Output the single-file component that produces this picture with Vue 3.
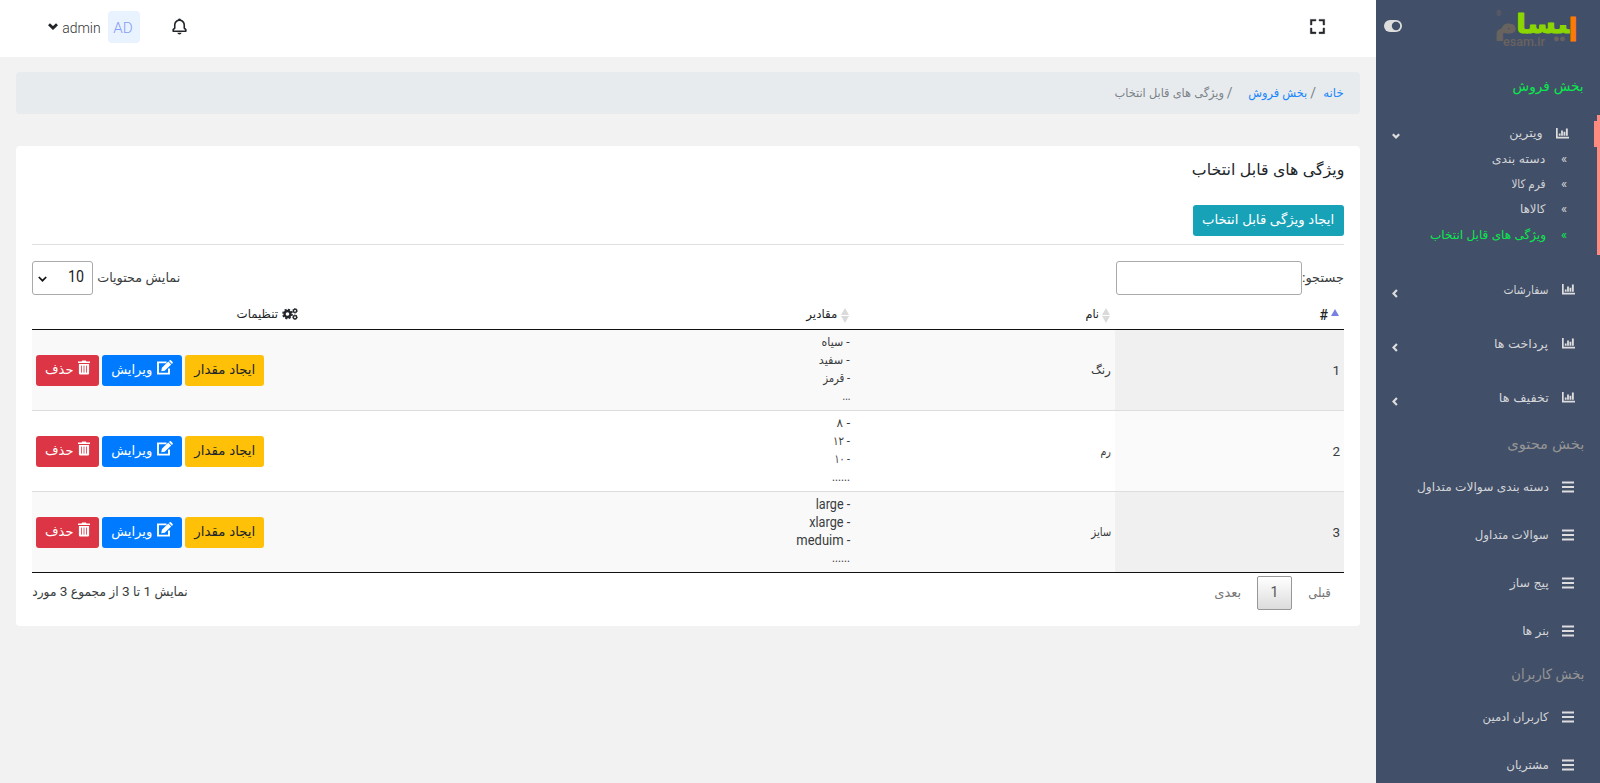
<script setup>
// Squeezes or widens a label horizontally to the given width in pixels.
const vFit = {
  mounted(el, { value }) {
    const natural = el.getBoundingClientRect().width
    if (!natural) return
    el.style.transform = `scaleX(${value / natural})`
    el.style.marginLeft = `${value - natural}px`
  }
}

const subItems = [
  { text: 'دسته بندی', w: 53.5 },
  { text: 'فرم کالا', w: 34 },
  { text: 'کالاها', w: 25.5 },
  { text: 'ویژگی های قابل انتخاب', w: 116, active: true }
]
const groups = [
  { text: 'سفارشات', w: 45 },
  { text: 'پرداخت ها', w: 54 },
  { text: 'تخفیف ها', w: 50 }
]
const sections = [
  {
    title: 'بخش محتوی', w: 77,
    items: [
      { text: 'دسته بندی سوالات متداول', w: 132 },
      { text: 'سوالات متداول', w: 74 },
      { text: 'پیج ساز', w: 39 },
      { text: 'بنر ها', w: 27 }
    ]
  },
  {
    title: 'بخش کاربران', w: 73,
    items: [
      { text: 'کاربران ادمین', w: 66 },
      { text: 'مشتریان', w: 42.5 }
    ]
  }
]
const rows = [
  { id: 1, name: 'رنگ', w: 20, values: [['- سیاه', 28], ['- سفید', 31], ['- قرمز', 27], ['...', 8]] },
  { id: 2, name: 'رم', w: 10.5, values: [['- ۸', 13.5], ['- ۱۲', 17], ['- ۱۰', 15.5], ['......', 18]] },
  { id: 3, name: 'سایز', w: 20, values: [['- large', 34.5], ['- xlarge', 41], ['- meduim', 54], ['......', 18]] }
]
</script>

<template>
  <div class="page" dir="rtl">
    <aside class="sidebar">
      <div class="brand">
        <svg class="logo" width="84" height="42" viewBox="0 0 84 42" direction="ltr">
          <text class="lg orange" x="74.5" y="32.5" textLength="9" lengthAdjust="spacingAndGlyphs">ا</text>
          <text class="lg green" x="22" y="25" textLength="53" lengthAdjust="spacingAndGlyphs">&#x200D;ىسا</text>
          <text class="lg gray" x="1" y="26" textLength="22" lengthAdjust="spacingAndGlyphs">م</text>
          <text class="latin" x="9" y="37.500" textLength="42" lengthAdjust="spacingAndGlyphs">esam.ir</text>
          <text class="reg" x="2" y="7.500">®</text>
          <circle cx="62.5" cy="31" r="2.4" fill="#69635f" />
          <circle cx="68.5" cy="31" r="2.4" fill="#69635f" />
        </svg>
        <svg class="toggle" width="18" height="12" viewBox="0 0 18 12"><rect width="18" height="12" rx="6" fill="#ddd" /><circle cx="12" cy="6" r="4.2" fill="#424f68" /></svg>
      </div>
      <div class="section first"><span v-fit="71" class="t">بخش فروش</span></div>
      <div class="open-group">
        <div class="item open">
          <svg class="chart" width="13" height="11" viewBox="0 0 13 11"><path d="M0 0h1.700v8.700H13v1.800H0zM2.800 5.500h1.800v2.300H2.800zM5.100 2.500h1.800v5.300H5.100zM7.500 3.700h1.800v4.100H7.500zM9.900.5h1.900v7.300H9.900z" /></svg>
          <span v-fit="33.5" class="t">ویترین</span>
          <svg class="chev" width="8" height="6" viewBox="0 0 8 6"><path d="M.8 1.200L4 4.400l3.200-3.200" /></svg>
        </div>
        <div v-for="s in subItems" :key="s.text" class="sub" :class="{ active: s.active }">
          <span class="raquo">»</span><span v-fit="s.w" class="t">{{ s.text }}</span>
        </div>
      </div>
      <div v-for="g in groups" :key="g.text" class="item group">
        <svg class="chart" width="13" height="11" viewBox="0 0 13 11"><path d="M0 0h1.700v8.700H13v1.800H0zM2.800 5.500h1.800v2.300H2.800zM5.100 2.500h1.800v5.300H5.100zM7.500 3.700h1.800v4.100H7.500zM9.900.5h1.900v7.300H9.900z" /></svg>
        <span v-fit="g.w" class="t">{{ g.text }}</span>
        <svg class="chev" width="6" height="9" viewBox="0 0 6 9"><path d="M4.900 1L1.500 4.500 4.900 8" /></svg>
      </div>
      <template v-for="sec in sections" :key="sec.title">
        <div class="section"><span v-fit="sec.w" class="t">{{ sec.title }}</span></div>
        <div v-for="i in sec.items" :key="i.text" class="item menu">
          <svg class="bars" width="12" height="12" viewBox="0 0 12 12"><path d="M0 .5h12v2H0zM0 5h12v2H0zM0 9.500h12v2H0z" /></svg>
          <span v-fit="i.w" class="t">{{ i.text }}</span>
        </div>
      </template>
    </aside>

    <div class="main">
      <header class="topbar">
        <svg class="full" width="19" height="19" viewBox="0 0 24 24"><path d="M5 5h5V3H3v7h2zm5 14H5v-5H3v7h7zm11-5h-2v5h-5v2h7zm-2-4h2V3h-7v2h5z" /></svg>
        <svg class="bell" width="19" height="19" viewBox="0 0 24 24"><path d="M19 13.586V10c0-3.217-2.185-5.927-5.145-6.742C13.562 2.520 12.846 2 12 2s-1.562.520-1.855 1.258C7.185 4.074 5 6.783 5 10v3.586l-1.707 1.707A.996.996 0 0 0 3 16v2a1 1 0 0 0 1 1h16a1 1 0 0 0 1-1v-2a.996.996 0 0 0-.293-.707L19 13.586zM19 17H5v-.586l1.707-1.707A.996.996 0 0 0 7 14v-4c0-2.757 2.243-5 5-5s5 2.243 5 5v4c0 .266.105.520.293.707L19 16.414V17zm-7 5a2.980 2.980 0 0 0 2.818-2H9.182A2.980 2.980 0 0 0 12 22z" /></svg>
        <div class="avatar"><span v-fit="19.5" class="t">AD</span></div>
        <span v-fit="38.5" class="t user">admin</span>
        <svg class="caret" width="10" height="7" viewBox="0 0 10 7"><path d="M1 1.300l4 3.800 4-3.800" /></svg>
      </header>

      <nav class="crumbs">
        <a v-fit="20.5" class="t">خانه</a><span class="slash s1">/</span>
        <a v-fit="59" class="t">بخش فروش</a><span class="slash s2">/</span>
        <span v-fit="109.5" class="t">ویژگی های قابل انتخاب</span>
      </nav>

      <section class="card">
        <h1><span v-fit="152.5" class="t">ویژگی های قابل انتخاب</span></h1>
        <button class="btn info"><span v-fit="132" class="t">ایجاد ویژگی قابل انتخاب</span></button>
        <div class="rule"></div>
        <div class="controls">
          <label class="search"><span v-fit="42" class="t">جستجو:</span><input type="text" /></label>
          <div class="length">
            <span v-fit="83" class="t">نمایش محتویات</span>
            <div class="select"><span v-fit="16" class="t">10</span>
              <svg width="9" height="6" viewBox="0 0 9 6"><path d="M.8 1l3.700 3.700L8.200 1" /></svg>
            </div>
          </div>
        </div>

        <div class="table">
          <div class="tr head">
            <div class="c1"><svg class="up" width="8" height="7" viewBox="0 0 8 7"><path d="M4 0l4 7H0z" fill="#7880e0" /></svg><span class="hash">#</span></div>
            <div class="c2"><svg class="sort" width="8" height="15" viewBox="0 0 8 15"><path d="M4 0l4 7H0zM0 8h8l-4 7z" fill="#dadada" /></svg><span v-fit="13.5" class="t">نام</span></div>
            <div class="c3"><svg class="sort" width="8" height="15" viewBox="0 0 8 15"><path d="M4 0l4 7H0zM0 8h8l-4 7z" fill="#dadada" /></svg><span v-fit="31" class="t">مقادیر</span></div>
            <div class="c4">
              <svg class="cogs" width="16" height="12" viewBox="0 0 16 12" fill="none" stroke="#212529">
                <circle cx="5.5" cy="6" r="3" stroke-width="2.400" /><circle cx="5.5" cy="6" r="4.600" stroke-width="1.500" stroke-dasharray="2.100 1.510" />
                <circle cx="13" cy="2.800" r="1.600" stroke-width="1.300" /><circle cx="13" cy="2.800" r="2.300" stroke-width=".9" stroke-dasharray="1.100 .7" />
                <circle cx="13" cy="9.200" r="1.600" stroke-width="1.300" /><circle cx="13" cy="9.200" r="2.300" stroke-width=".9" stroke-dasharray="1.100 .7" />
              </svg>
              <span v-fit="41.5" class="t">تنظیمات</span>
            </div>
          </div>
          <div v-for="r in rows" :key="r.id" class="tr row">
            <div class="c1"><span class="num">{{ r.id }}</span></div>
            <div class="c2"><span v-fit="r.w" class="t">{{ r.name }}</span></div>
            <div class="c3">
              <div v-for="(v, n) in r.values" :key="n" class="val"><span v-fit="v[1]" class="t">{{ v[0] }}</span></div>
            </div>
            <div class="c4">
              <button class="btn warn"><span v-fit="61" class="t">ایجاد مقدار</span></button>
              <button class="btn edit">
                <svg width="16" height="15" viewBox="0 0 16 15"><path d="M9.500 2.400H1V13.600h11V8.600" fill="none" stroke="#fff" stroke-width="1.900" /><path d="M4.300 11.200l.6-3.400L11.300 1.600l2.900 2.900L7.700 10.700zM12 .9l.7-.6q.6-.5 1.200 0l1.700 1.700q.5.600 0 1.200l-.7.700z" fill="#fff" /></svg>
                <span v-fit="41" class="t">ویرایش</span>
              </button>
              <button class="btn del">
                <svg width="12" height="15" viewBox="0 0 12 15"><path d="M0 1.600h3.500L4.300.400h3.400l.8 1.200H12v1.500H0zM.9 4h10.200v9.300q0 1.300-1.300 1.300H2.200Q.9 14.600.9 13.300z" fill="#fff" /><path d="M3.500 5.600v7M6 5.600v7M8.500 5.600v7" stroke="#dc3545" stroke-width=".8" /></svg>
                <span v-fit="28.5" class="t">حذف</span>
              </button>
            </div>
          </div>
        </div>

        <div class="foot">
          <div class="pager">
            <span v-fit="22.5" class="t">قبلی</span>
            <span class="current">1</span>
            <span v-fit="27" class="t">بعدی</span>
          </div>
          <span v-fit="155.5" class="t">نمایش 1 تا 3 از مجموع 3 مورد</span>
        </div>
      </section>
    </div>
  </div>
</template>

<style>
body { margin: 0; background: #f2f2f2; overflow: hidden; }
</style>

<style scoped>
* { box-sizing: border-box; }
.page { display: flex; height: 783px; overflow: hidden; font-family: Roboto, "DejaVu Sans Condensed", "DejaVu Sans", sans-serif; font-size: 13px; line-height: 18px; color: #3a3d40; font-weight: 400; background: #f2f2f2; }
.t { display: inline-block; white-space: nowrap; transform-origin: right center; flex: none; }
svg { flex: none; display: block; }

.sidebar { width: 224px; flex: none; height: 783px; overflow: hidden; background: #424f68; color: #d3d5d8; font-size: 12px; }
.brand { height: 57px; display: flex; justify-content: space-between; padding: 8px 22px 0 8px; }
.toggle { margin-top: 12px; }
.lg { font-family: "DejaVu Sans", sans-serif; font-weight: bold; font-size: 26px; stroke-width: 1; stroke-linejoin: round; }
.orange { fill: #ff7a00; stroke: #ff7a00; font-size: 31px; }
.green { fill: #8bd600; stroke: #8bd600; }
.gray { fill: #69635f; stroke: #69635f; }
.latin { font: 500 12px Roboto, sans-serif; fill: #69635f; }
.reg { font: 7px Roboto, sans-serif; fill: #69635f; }
.section { height: 38px; padding-right: 16px; display: flex; align-items: center; font-size: 14px; color: #959595; }
.section.first { height: 58px; color: #09e94d; }
.open-group { height: 140px; border-right: 3px solid #ff8a80; padding-top: 6px; margin-bottom: 8px; }
.item { display: flex; align-items: center; }
.item svg { fill: #ddd; }
.item .chev { fill: none; stroke: #ddd; stroke-width: 2.200; margin-right: auto; }
.open { height: 26px; padding: 0 25px 2px 16px; border-right: 3px solid #ff8a80; }
.open .t { margin-right: 13px; }
.open .chev { margin-top: 6px; }
.sub { height: 25.300px; padding: 0 30px 2px 0; display: flex; align-items: center; }
.raquo { width: 21.500px; font-size: 13px; line-height: 16px; }
.active { color: #09e94d; }
.group { height: 54px; padding: 0 25.500px 0 16px; }
.group .t, .menu .t { margin-right: 13px; }
.group .chart { margin-bottom: 2px; }
.group .chev { margin-top: 7px; }
.menu { height: 48px; padding-right: 26px; }

.main { flex: 1; min-width: 0; }
.topbar { height: 57px; background: #fff; display: flex; align-items: flex-start; padding: 0 49.500px 0 48px; color: #333; font-weight: 300; }
.full { margin-top: 16.500px; }
.full path { stroke: #212529; stroke-width: .6; }
.bell { margin: 16.500px auto 0 30px; }
.full path, .bell path { fill: #212529; }
.avatar { width: 32px; height: 32px; margin-top: 11px; border-radius: 4px; background: #e9f2ff; color: #869df5; font-size: 15.500px; padding-top: 1px; display: flex; align-items: center; justify-content: center; }
.user { font-size: 15.500px; margin: 19px 7px 0 0; }
.caret { margin: 22.500px 4px 0 0; }
.caret path { fill: none; stroke: #212529; stroke-width: 2.800; }

.crumbs { margin: 15px 16px 0; height: 42px; border-radius: 4px; background: #e7ebee; padding: 0 16px 1px; display: flex; align-items: center; font-size: 12px; color: #7b8288; }
.crumbs a { color: #1a86fb; }
.slash { width: 5px; font-size: 14px; }
.s1 { margin: 0 7.500px 0 3.500px; }
.s2 { margin: 0 16px 0 3.500px; }

.card { margin: 32px 16px 0; height: 480px; background: #fff; border-radius: 4px; padding: 13px 16px 0; }
h1 { margin: 0; height: 46px; font-size: 15.500px; line-height: 23px; font-weight: 500; color: #212529; }
.btn { height: 31px; border: 0; border-radius: 3px; font: inherit; font-size: 13.500px; color: #fff; display: flex; align-items: center; justify-content: center; padding: 0 0 3px; flex: none; }
.info { width: 151px; background: #17a2b8; }
.rule { height: 1px; background: #dfe0e2; margin-top: 8px; }
.controls { display: flex; justify-content: space-between; height: 50px; padding-top: 16px; }
.search, .length { display: flex; height: 34px; align-items: center; }
input { width: 186px; height: 34px; border: 1px solid #aaa; border-radius: 3px; background: transparent; padding: 5px; }
.select { width: 61px; height: 34px; border: 1px solid #aaa; border-radius: 3px; margin-right: 4px; display: flex; align-items: center; justify-content: space-between; padding: 0 8px 3px 5px; font-size: 16px; color: #222; }
.select svg { margin-top: 4px; }
.select path { fill: none; stroke: #111; stroke-width: 1.700; }

.table { border-bottom: 1px solid #111; }
.tr { display: grid; grid-template-columns: 229px 261px 552px 270px; }
.head { height: 35px; border-bottom: 1px solid #111; font-weight: 500; font-size: 12px; color: #212529; align-items: center; padding-top: 6px; }
.head > div { display: flex; align-items: center; }
.head .c1, .head .c2, .head .c3 { padding-right: 5px; }
.head .t { margin-right: 3.500px; }
.head .c2 .t, .head .c3 .t, .head .c4 .t { position: relative; top: -1px; }
.sort { margin-top: 1px; }
.up { margin-bottom: 6px; }
.hash { margin-right: 3px; font-size: 14px; }
.head .c4 { padding-right: 4px; }
.head .cogs { margin-bottom: 2px; }
.row { height: 81px; }
.row:not(:last-child) { border-bottom: 1px solid #ddd; }
.row:last-child { height: 80px; }
.row > div { display: flex; align-items: center; padding: 0 4px; }
.row .c3 { flex-direction: column; align-items: flex-start; padding-top: 3px; }
.row .c4 { justify-content: flex-end; gap: 3px; }
.row .c1 { background: #fafafa; padding-bottom: 1px; }
.row:nth-child(even) { background: #f9f9f9; }
.row:nth-child(even) .c1 { background: #f0f0f0; }
.num { font-size: 13.500px; }
.row .c2, .val { font-size: 12px; }
.val { height: 18px; display: flex; }
.row:last-child .val { font-size: 14px; }
.row .val:last-child { font-size: 12px; }
.warn { width: 79px; background: #ffc107; color: #212529; }
.edit { width: 80px; background: #007bff; gap: 4px; }
.del { width: 63px; background: #dc3545; gap: 4px; }
.btn svg { margin-bottom: 2px; }

.foot { display: flex; justify-content: space-between; padding-top: 3px; }
.foot > .t { margin-top: 7px; }
.pager { display: flex; align-items: center; height: 34px; color: #777; padding-right: 13.500px; }
.current { width: 35px; height: 34px; margin: 0 16px; border: 1px solid #979797; border-radius: 2px; background: linear-gradient(#fff, #dcdcdc); text-align: center; line-height: 31px; font-size: 14px; color: #555; }
</style>
